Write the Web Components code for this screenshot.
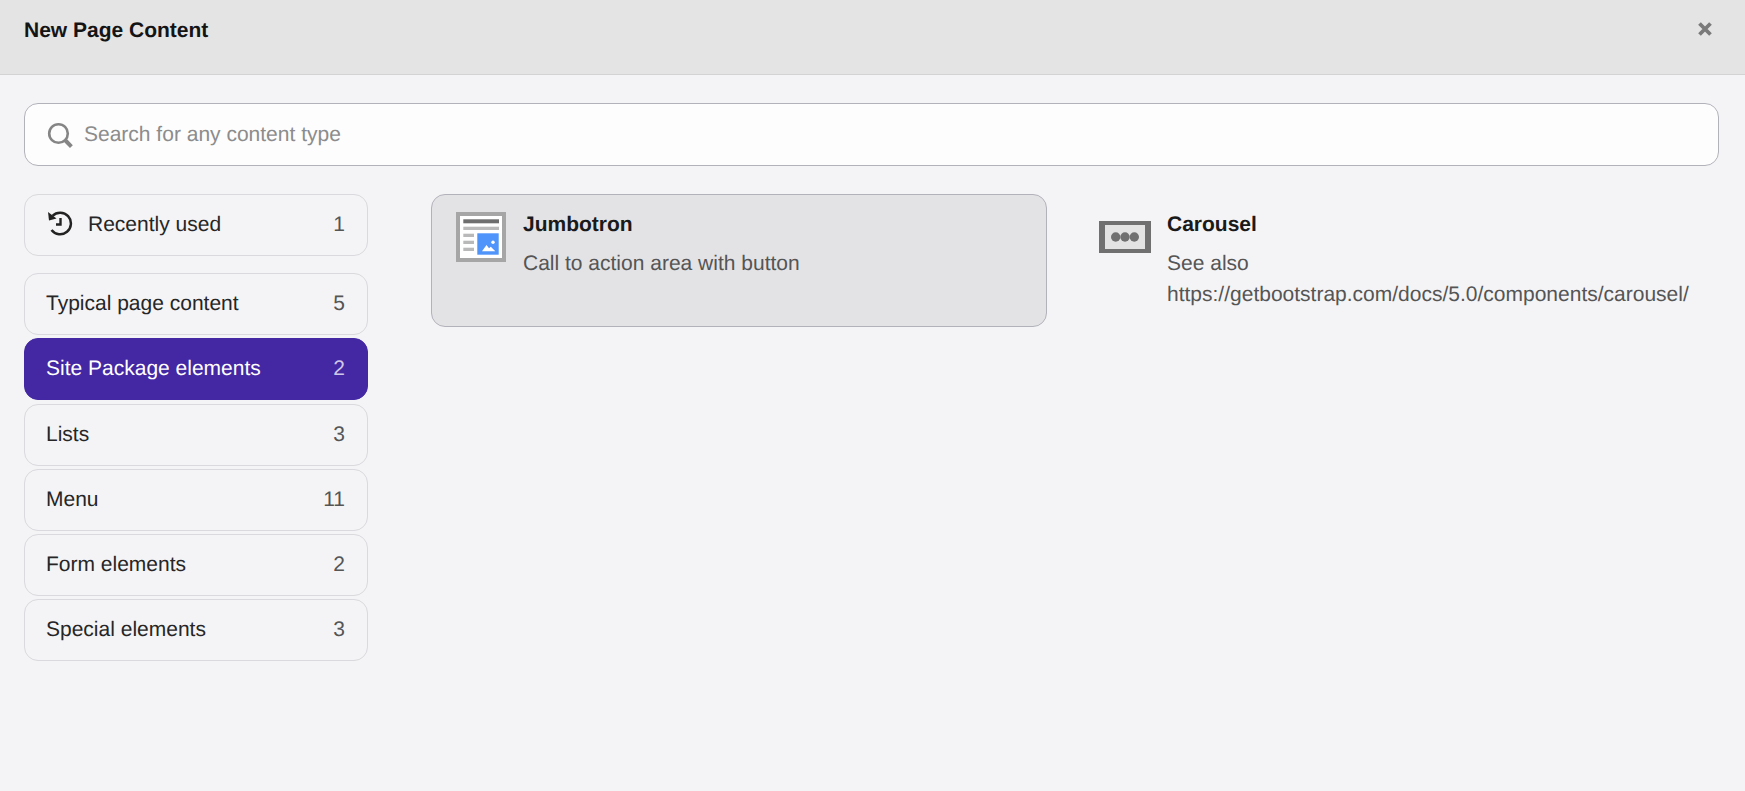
<!DOCTYPE html>
<html>
<head>
<meta charset="utf-8">
<title>New Page Content</title>
<style>
    html, body { margin: 0; height: 100%; }
    body { font-family: "Liberation Sans", Arial, sans-serif; background: #f4f4f6; color: #1a1a1a; text-rendering: geometricPrecision; }
</style>
</head>
<body>
<wizard-dialog title-text="New Page Content">
    <wizard-search placeholder="Search for any content type"></wizard-search>
    <wizard-nav slot="nav">
        <wizard-nav-item label="Recently used" count="1" recent></wizard-nav-item>
        <wizard-nav-item label="Typical page content" count="5"></wizard-nav-item>
        <wizard-nav-item label="Site Package elements" count="2" active></wizard-nav-item>
        <wizard-nav-item label="Lists" count="3"></wizard-nav-item>
        <wizard-nav-item label="Menu" count="11"></wizard-nav-item>
        <wizard-nav-item label="Form elements" count="2"></wizard-nav-item>
        <wizard-nav-item label="Special elements" count="3"></wizard-nav-item>
    </wizard-nav>
    <wizard-card slot="cards" heading="Jumbotron" selected>
        <svg slot="icon" width="50" height="50" viewBox="0 0 50 50">
            <rect width="50" height="50" fill="#a6a6a6"/>
            <rect x="4" y="4" width="42" height="42" fill="#fff"/>
            <rect x="7.300" y="7.300" width="35.700" height="4" fill="#6e6e6e"/>
            <rect x="7.300" y="14.700" width="35.700" height="3.300" fill="#b9b9b9"/>
            <rect x="7.300" y="21.700" width="10.700" height="3.300" fill="#b9b9b9"/>
            <rect x="7.300" y="28.700" width="10.700" height="3.300" fill="#b9b9b9"/>
            <rect x="7.300" y="35.700" width="10.700" height="3.300" fill="#b9b9b9"/>
            <rect x="21.300" y="21.300" width="21.400" height="21.400" fill="#4f94fa"/>
            <circle cx="37" cy="30.300" r="1.700" fill="#fff"/>
            <path d="M26 39.300 L30.500 33 L33 36.200 L34.800 34.800 L39.300 39.300 Z" fill="#fff"/>
        </svg>
        Call to action area with button
    </wizard-card>
    <wizard-card slot="cards" heading="Carousel">
        <svg slot="icon" style="margin:0 -1px" width="52" height="50" viewBox="0 0 52 50">
            <rect x="0" y="9" width="52" height="32" fill="#707070"/>
            <rect x="6" y="13" width="40" height="24" fill="#e3e3e3"/>
            <circle cx="16.700" cy="25" r="4.700" fill="#707070"/>
            <circle cx="26" cy="25" r="4.700" fill="#707070"/>
            <circle cx="35.300" cy="25" r="4.700" fill="#707070"/>
        </svg>
        See also https://getbootstrap.com/docs/5.0/components/carousel/
    </wizard-card>
</wizard-dialog>

<script>
class WizardDialog extends HTMLElement {
    constructor() {
        super();
        this.attachShadow({mode:'open'});
    }

    connectedCallback() {
        this.shadowRoot.innerHTML = `
        <style>
            :host{
                display: block;
                min-height: 791px;
                box-sizing: border-box;
            }
            header{
                display: flex;
                justify-content: space-between;
                height: 75px;
                box-sizing: border-box;
                padding: 18px 32px 0 24px;
                background: #e4e4e5;
                border-bottom: 1px solid #d3d3d4;
            }
            h1{
                margin: 0;
                font-size: 21px;
                line-height: 25px;
                font-weight: 700;
                color: #141414;
            }
            #close{
                display: block;
                margin-top: 3px;
            }
            main{
                padding: 28px 26px 0 24px;
            }
            #columns{
                display: flex;
                margin-top: 28px;
            }
            #cards{
                display: grid;
                grid-template-columns: 616px 1fr;
                gap: 0 28px;
                margin-left: 63px;
                flex: 1;
                align-items: start;
            }
        </style>
        <header>
            <h1>${this.getAttribute('title-text')}</h1>
            <svg id="close" width="16" height="16" viewBox="0 0 16 16">
                <path d="M2.500 2.500 L13.500 13.500 M13.500 2.500 L2.500 13.500" stroke="#7a7a7a" stroke-width="3.800" fill="none"/>
            </svg>
        </header>
        <main>
            <slot></slot>
            <div id="columns">
                <slot name="nav"></slot>
                <div id="cards"><slot name="cards"></slot></div>
            </div>
        </main>
        `;
    }
}
window.customElements.define('wizard-dialog', WizardDialog);

class WizardSearch extends HTMLElement {
    constructor() {
        super();
        this.attachShadow({mode:'open'});
    }

    connectedCallback() {
        this.shadowRoot.innerHTML = `
        <style>
            :host{
                display: flex;
                align-items: center;
                gap: 11px;
                height: 63px;
                box-sizing: border-box;
                padding: 0 22px;
                background: #fdfdfd;
                border: 1px solid #b2b2bb;
                border-radius: 14px;
            }
            svg{ display: block; flex: none; }
            span{
                font-size: 21px;
                color: #8c8c8c;
            }
        </style>
        <svg width="26" height="26" viewBox="0 0 26 26">
            <circle cx="11.500" cy="11.500" r="9.300" fill="none" stroke="#858585" stroke-width="2.600"/>
            <path d="M18 18 L24.400 24.600" stroke="#858585" stroke-width="4" fill="none"/>
        </svg>
        <span>${this.getAttribute('placeholder')}</span>
        `;
    }
}
window.customElements.define('wizard-search', WizardSearch);

class WizardNav extends HTMLElement {
    constructor() {
        super();
        this.attachShadow({mode:'open'});
    }

    connectedCallback() {
        this.shadowRoot.innerHTML = `
        <style>
            :host{
                display: flex;
                flex-direction: column;
                gap: 3.200px;
                width: 344px;
                flex: none;
            }
        </style>
        <slot></slot>
        `;
    }
}
window.customElements.define('wizard-nav', WizardNav);

class WizardNavItem extends HTMLElement {
    constructor() {
        super();
        this.attachShadow({mode:'open'});
    }

    connectedCallback() {
        var recent = this.hasAttribute('recent');
        this.shadowRoot.innerHTML = `
        <style>
            :host{
                display: flex;
                align-items: center;
                height: 62px;
                box-sizing: border-box;
                padding: 0 22px 0 21px;
                border: 1px solid #d9d9de;
                border-radius: 14px;
                font-size: 21px;
                color: #262626;
            }
            :host([recent]){
                margin-bottom: 14px;
                padding-left: 22px;
            }
            :host([active]){
                background: #4327a3;
                border-color: #4327a3;
                color: #fff;
            }
            svg{ display: block; flex: none; margin-right: 15px; margin-top: -4px; }
            .label{ flex: 1; }
            .count{ color: #555; }
            :host([active]) .count{ color: #cfc8e8; }
        </style>
        ${recent ? `<svg width="26" height="26" viewBox="0 0 26 26">
            <path d="M5.500 5.800 A10.800 10.800 0 1 1 4.500 20" fill="none" stroke="#222" stroke-width="2.500"/>
            <path d="M1 2 L2 10.500 L9.500 8.500 Z" fill="#222"/>
            <path d="M13.500 8 V14.500 H9" fill="none" stroke="#222" stroke-width="2.400"/>
        </svg>` : ''}
        <span class="label">${this.getAttribute('label')}</span>
        <span class="count">${this.getAttribute('count')}</span>
        `;
    }
}
window.customElements.define('wizard-nav-item', WizardNavItem);

class WizardCard extends HTMLElement {
    constructor() {
        super();
        this.attachShadow({mode:'open'});
    }

    connectedCallback() {
        this.shadowRoot.innerHTML = `
        <style>
            :host{
                display: flex;
                gap: 17px;
                height: 133px;
                box-sizing: border-box;
                padding: 17px 24px;
                border: 1px solid transparent;
                border-radius: 14px;
            }
            :host([selected]){
                background: #e3e3e5;
                border-color: #b2b2bb;
            }
            .icon{ flex: none; line-height: 0; width: 50px; }
            h2{
                margin: 0 0 11px;
                font-size: 21px;
                line-height: 25px;
                font-weight: 700;
                color: #1a1a1a;
            }
            p{
                margin: 0;
                font-size: 21px;
                line-height: 31px;
                color: #555;
            }
        </style>
        <div class="icon"><slot name="icon"></slot></div>
        <div>
            <h2>${this.getAttribute('heading')}</h2>
            <p><slot></slot></p>
        </div>
        `;
    }
}
window.customElements.define('wizard-card', WizardCard);
</script>
</body>
</html>
